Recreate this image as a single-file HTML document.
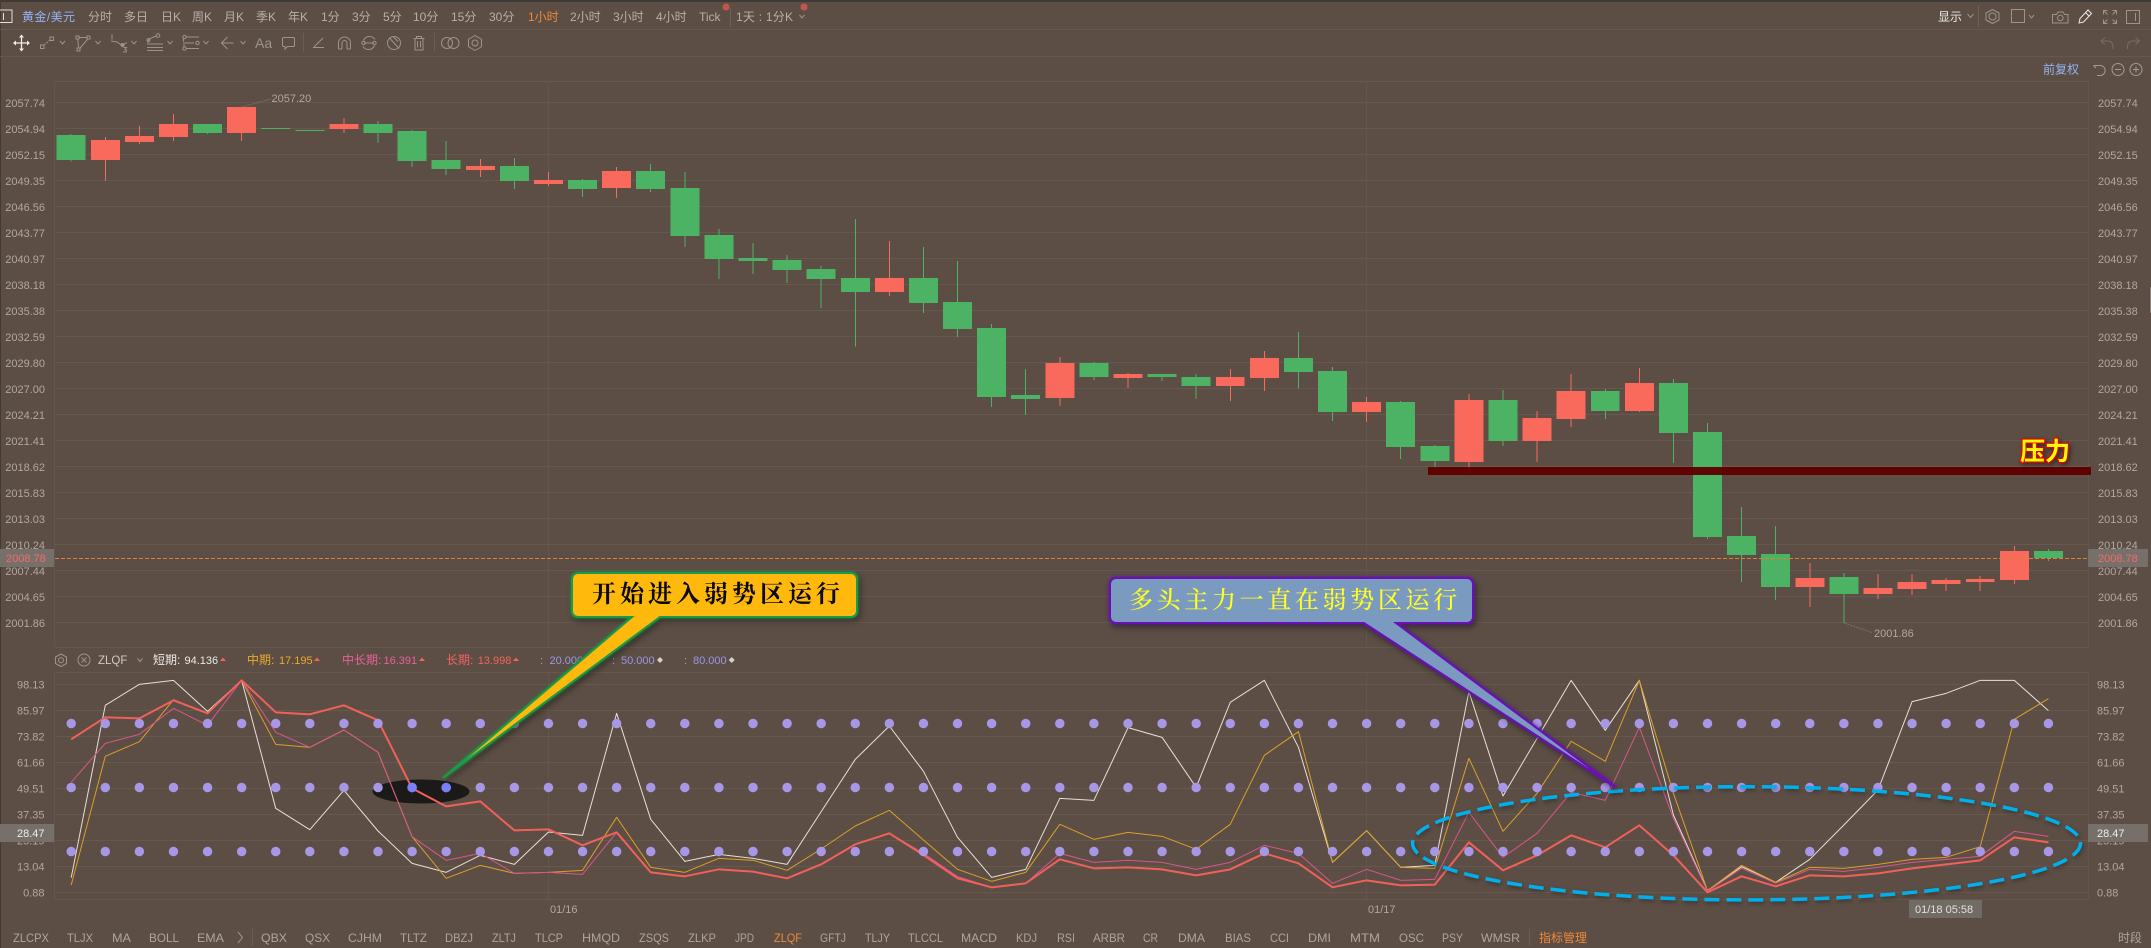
<!DOCTYPE html>
<html lang="zh"><head><meta charset="utf-8"><title>ZLQF</title>
<style>
html,body{margin:0;padding:0;background:#5c4e45;width:2151px;height:948px;overflow:hidden}
svg{display:block;font-family:"Liberation Sans","Noto Sans CJK SC",sans-serif}
.t{font-size:12px;fill:#b8afa6}
.a{font-size:11px;fill:#b0a79f}
.e{text-anchor:end}
.b{font-size:12px;fill:#ada59d}
.i{fill:none;stroke:#9c9389;stroke-width:1}
.n{vector-effect:non-scaling-stroke;fill:none;stroke-linejoin:round}
.c{font-family:"Noto Serif CJK SC","Liberation Serif",serif}
</style></head><body>
<svg width="2151" height="948" viewBox="0 0 2151 948" xmlns="http://www.w3.org/2000/svg">
<rect width="2151" height="948" fill="#5c4e45"/>
<rect width="2151" height="2" fill="#3f3a36"/>
<rect width="1" height="948" fill="#403b37"/>
<rect x="2148" y="29" width="3" height="1" fill="#c8762f"/>
<rect x="2150" y="287" width="1" height="26" fill="#8a8178"/>

<!-- frame lines -->
<g shape-rendering="crispEdges" fill="#65584e">
<rect y="29" width="2151" height="1"/><rect y="56" width="2151" height="1"/>
<rect x="55" y="81" width="2033" height="1"/><rect x="55" y="647" width="2033" height="1"/>
<rect x="55" y="672" width="2033" height="1"/><rect x="55" y="899" width="2033" height="1"/>
<rect x="54" y="81" width="1" height="566" fill="#63564d"/><rect x="2088" y="81" width="1" height="566" fill="#63564d"/>
<rect x="54" y="672" width="1" height="227" fill="#63564d"/><rect x="2088" y="672" width="1" height="227" fill="#63564d"/>
<rect x="548" y="81" width="1" height="566" fill="#62554c"/><rect x="1366" y="81" width="1" height="566" fill="#62554c"/>
<rect x="548" y="672" width="1" height="227" fill="#62554c"/><rect x="1366" y="672" width="1" height="227" fill="#62554c"/>
</g>
<line x1="1071.5" x2="1071.5" y1="102" y2="623" stroke="#65584e" stroke-width="2033" stroke-dasharray="1 25" shape-rendering="crispEdges"/>
<line x1="1071.5" x2="1071.5" y1="684" y2="893" stroke="#65584e" stroke-width="2033" stroke-dasharray="1 25" shape-rendering="crispEdges"/>

<!-- toolbar 1 -->
<rect x="-1" y="10" width="13" height="12.5" fill="none" stroke="#e4dfda"/><path d="M3.5 13v7" stroke="#e4dfda"/>
<text x="22" y="21" class="t" style="fill:#93b4f2" textLength="53">黄金/美元</text>
<text x="88" y="21" class="t">分时</text><text x="124" y="21" class="t">多日</text>
<text x="161" y="21" class="t">日K</text><text x="192" y="21" class="t">周K</text><text x="224" y="21" class="t">月K</text><text x="256" y="21" class="t">季K</text><text x="288" y="21" class="t">年K</text>
<text x="321" y="21" class="t">1分</text><text x="352" y="21" class="t">3分</text><text x="383" y="21" class="t">5分</text>
<text x="413" y="21" class="t">10分</text><text x="451" y="21" class="t">15分</text><text x="489" y="21" class="t">30分</text>
<text x="528" y="21" class="t" style="fill:#ef8838">1小时</text>
<text x="570" y="21" class="t">2小时</text><text x="613" y="21" class="t">3小时</text><text x="656" y="21" class="t">4小时</text>
<text x="699" y="21" class="t">Tick</text>
<rect x="730" y="8" width="1" height="19" fill="#6f6258"/>
<text x="736" y="21" class="t" textLength="57">1天 : 1分K</text>
<path class="i" d="M799.5 15l2.5 3 2.5-3"/>
<circle cx="726" cy="7" r="3.5" fill="#c0564f"/><circle cx="804" cy="7" r="3.5" fill="#c0564f"/>

<text x="1938" y="21" class="t" style="fill:#ece8e4">显示</text>
<path class="i" d="M1967.500 14l3 3.500 3-3.500"/>
<rect x="1978" y="6" width="1" height="21" fill="#6f6258"/>
<g class="i"><path d="M1992.500 9.500l6.500 3.500v7l-6.500 3.500-6.500-3.500v-7z" stroke-linejoin="round"/><circle cx="1992.500" cy="16.500" r="3.500"/>
<rect x="2011.500" y="9.500" width="13" height="13"/><path d="M2029 15l2.500 3 2.500-3"/>
<path d="M2052.500 14.500h4l1.500-2.500h5l1.500 2.500h3.500v8.500h-15.500z"/><circle cx="2060.300" cy="18" r="2.800"/></g>
<path d="M2079 23l1-4.500 8-8.500 3.500 3.500-8 8.500zM2085.500 12.500l3.500 3.500" fill="none" stroke="#ece8e4"/>
<path class="i" d="M2103.500 14.500v-4h4M2116.500 14.500v-4h-4M2103.500 19.500v4h4M2116.500 19.500v4h-4M2104 11l3.500 3.500M2116 11l-3.500 3.500M2104 23l3.500-3.500M2116 23l-3.500-3.500"/>
<rect class="i" x="2126.500" y="10.500" width="13" height="13"/><path class="i" d="M2135.500 13v8"/>

<!-- toolbar 2 -->
<g fill="none" stroke="#f0ece8" stroke-width="1.300"><path d="M21.500 36v14M14.500 43h14"/></g>
<path fill="#f0ece8" d="M21.500 34.500l2.500 3h-5zM21.500 51.500l2.500-3h-5zM13 43l3-2.500v5zM30 43l-3-2.500v5z"/>
<g class="i">
<rect x="40.500" y="45" width="3.500" height="3.500"/><rect x="50" y="37" width="3.500" height="3.500"/><path d="M44 45l6-5" stroke-dasharray="2 1"/>
<path d="M60 41l2.500 3 2.500-3"/>
<rect x="76" y="36" width="3" height="3"/><rect x="87" y="36" width="3" height="3"/><rect x="77" y="48" width="3" height="3"/><path d="M79 37.500h8M77.700 39l1 9M87.800 39l-8 9.500"/>
<path d="M95.500 41l2.500 3 2.500-3"/>
<path d="M112 34.500v5M111 41l6 1 5 3.500 5-3"/><circle cx="122.500" cy="45" r="1.500" fill="#a39b93"/>
<path d="M123.500 47.500h3l-1.500 2 1.500 1-.5 1.500h-3"/>
<path d="M131.500 41l2.500 3 2.500-3"/>
<path d="M147 44h16M147 47.500h16M147 50.500h16M148 43v-2.500q3-3 8.500-4.500"/><circle cx="158" cy="35.500" r="1.800"/><circle cx="148.500" cy="40" r="1.500"/>
<path d="M167.500 41l2.500 3 2.500-3"/>
<path d="M186 37h13M183 43h11M186 48.500h13"/><circle cx="184.500" cy="37" r="1.700"/><circle cx="197.500" cy="43" r="1.700"/><circle cx="184.500" cy="48.500" r="1.700"/><path d="M183.500 38.500v3M184 44.500v3"/>
<path d="M203.500 41l2.500 3 2.500-3"/>
<path d="M233.500 43H222M227.500 37l-6 6 6 6"/>
<path d="M240.500 41l2.500 3 2.500-3"/>
</g>
<text x="255" y="48" font-size="14" fill="#9c9389">Aa</text>
<g class="i">
<path d="M283.500 37.500h10a1 1 0 0 1 1 1v7a1 1 0 0 1-1 1h-6l-2.500 2.500v-2.500h-1.500a1 1 0 0 1-1-1v-7a1 1 0 0 1 1-1z"/>
<path d="M313 47.500h11M314 47l9-9"/>
<path d="M338.500 49V43a6 6 0 0 1 12 0v6M342 49V43a2.500 2.500 0 0 1 5 0v6M338.500 49H342M347 49h3.500"/>
<path d="M363.500 40.500a6.500 6.500 0 0 1 11.500-1M374.500 45.500a6.500 6.500 0 0 1-11.500 1M364 43h10"/><circle cx="363.500" cy="43" r="1.700"/><circle cx="374.500" cy="43" r="1.700"/>
<circle cx="394" cy="43" r="6.500"/><path d="M389.500 38l9.500 10.500M393 36.500l5 5"/>
<path d="M413.500 38.500h11M416.500 38.500v-2h5v2M415 38.500v11.500h8V38.500M417.500 41v6.500M420.500 41v6.500"/>
<circle cx="447" cy="43" r="5.500"/><circle cx="453.500" cy="43" r="5.500"/>
<path d="M475 35.500l6.500 3.750v7.500L475 50.500l-6.500-3.750v-7.500z" stroke-linejoin="round"/><circle cx="475" cy="43" r="3"/>
</g>
<rect x="303" y="33" width="1" height="19" fill="#6a5d53"/><rect x="434" y="33" width="1" height="19" fill="#6a5d53"/>
<path d="M2113 49v-3a5 5 0 0 0-5-5h-7m4-3.500l-4 3.500 4 3.500M2127.500 49v-3a5 5 0 0 1 5-5h7m-4-3.500l4 3.500-4 3.500" fill="none" stroke="#786c62"/>
<text x="2043" y="73.500" class="t" style="fill:#93b4f2">前复权</text>
<g fill="none" stroke="#a39b93"><path d="M2093.500 65.500h5.500a5 5 0 0 1 2 10h-4M2093.500 65.500l2.500 2.500"/><circle cx="2118" cy="69.500" r="6"/><path d="M2115 69.500h6"/><circle cx="2136" cy="69.500" r="6"/><path d="M2133 69.500h6M2136 66.500v6"/></g>

<!-- main axis labels -->
<g class="a">
<text x="45" y="107" class="a e">2057.74</text><text x="45" y="133" class="a e">2054.94</text><text x="45" y="159" class="a e">2052.15</text><text x="45" y="185" class="a e">2049.35</text><text x="45" y="211" class="a e">2046.56</text><text x="45" y="237" class="a e">2043.77</text><text x="45" y="263" class="a e">2040.97</text><text x="45" y="289" class="a e">2038.18</text><text x="45" y="315" class="a e">2035.38</text><text x="45" y="341" class="a e">2032.59</text><text x="45" y="367" class="a e">2029.80</text><text x="45" y="393" class="a e">2027.00</text><text x="45" y="419" class="a e">2024.21</text><text x="45" y="445" class="a e">2021.41</text><text x="45" y="471" class="a e">2018.62</text><text x="45" y="497" class="a e">2015.83</text><text x="45" y="523" class="a e">2013.03</text><text x="45" y="549" class="a e">2010.24</text><text x="45" y="575" class="a e">2007.44</text><text x="45" y="601" class="a e">2004.65</text><text x="45" y="627" class="a e">2001.86</text>
<text x="2098" y="107" class="a">2057.74</text><text x="2098" y="133" class="a">2054.94</text><text x="2098" y="159" class="a">2052.15</text><text x="2098" y="185" class="a">2049.35</text><text x="2098" y="211" class="a">2046.56</text><text x="2098" y="237" class="a">2043.77</text><text x="2098" y="263" class="a">2040.97</text><text x="2098" y="289" class="a">2038.18</text><text x="2098" y="315" class="a">2035.38</text><text x="2098" y="341" class="a">2032.59</text><text x="2098" y="367" class="a">2029.80</text><text x="2098" y="393" class="a">2027.00</text><text x="2098" y="419" class="a">2024.21</text><text x="2098" y="445" class="a">2021.41</text><text x="2098" y="471" class="a">2018.62</text><text x="2098" y="497" class="a">2015.83</text><text x="2098" y="523" class="a">2013.03</text><text x="2098" y="549" class="a">2010.24</text><text x="2098" y="575" class="a">2007.44</text><text x="2098" y="601" class="a">2004.65</text><text x="2098" y="627" class="a">2001.86</text>
</g>

<!-- candles: x in index units, y in 3x units -->
<g transform="translate(71.2 0) scale(34.09 .33333)" shape-rendering="crispEdges">
<path class="n" stroke="#4cb364" stroke-width="1" d="M0 402V485M4 372V402M6 384V387M7 390V393M9 363V429M10 390V501M11 423V525M13 474V567M15 537V591M17 492V576M18 516V741M19 687V837M20 729V822M21 765V849M22 798V924M23 657V1040M25 741V939M26 783V1011M27 972V1221M28 1107V1245M30 1086V1140M32 1122V1143M33 1122V1197M36 996V1165M37 1101V1263M39 1203V1377M40 1335V1401M42 1170V1338M45 1167V1257M47 1137V1389M48 1269V1617M49 1521V1746M50 1578V1800M52 1719V1869M58 1647V1683"/>
<path class="n" stroke="#f96a5c" stroke-width="1" d="M1 411V543M2 378V432M3 342V423M5 321V423M8 354V399M12 477V531M14 516V558M16 501V594M24 723V888M29 1071V1218M31 1119V1164M34 1107V1203M35 1053V1173M38 1191V1266M41 1182V1419M43 1233V1386M44 1122V1281M46 1104V1236M51 1689V1821M53 1722V1797M54 1722V1785M55 1734V1773M56 1728V1773M57 1638V1752"/>
<path fill="#4cb364" d="M-.425 405h.85V480h-.85zM3.575 372h.85V399h-.85zM5.575 384h.85V387h-.85zM6.575 390h.85V393h-.85zM8.575 372h.85V399h-.85zM9.575 393h.85V483h-.85zM10.575 480h.85V507h-.85zM12.575 498h.85V543h-.85zM14.575 540h.85V567h-.85zM16.575 513h.85V567h-.85zM17.575 564h.85V708h-.85zM18.575 705h.85V777h-.85zM19.575 774h.85V783h-.85zM20.575 780h.85V810h-.85zM21.575 807h.85V837h-.85zM22.575 834h.85V876h-.85zM24.575 834h.85V909h-.85zM25.575 906h.85V987h-.85zM26.575 984h.85V1191h-.85zM27.575 1185h.85V1197h-.85zM29.575 1089h.85V1131h-.85zM31.575 1122h.85V1131h-.85zM32.575 1131h.85V1158h-.85zM35.575 1074h.85V1116h-.85zM36.575 1113h.85V1236h-.85zM38.575 1206h.85V1341h-.85zM39.575 1338h.85V1383h-.85zM41.575 1200h.85V1323h-.85zM44.575 1173h.85V1233h-.85zM46.575 1149h.85V1299h-.85zM47.575 1296h.85V1611h-.85zM48.575 1608h.85V1665h-.85zM49.575 1662h.85V1761h-.85zM51.575 1731h.85V1782h-.85zM57.575 1653h.85V1674h-.85z"/>
<path fill="#f96a5c" d="M.575 420h.85V480h-.85zM1.575 408h.85V426h-.85zM2.575 372h.85V411h-.85zM4.575 321h.85V399h-.85zM7.575 372h.85V387h-.85zM11.575 498h.85V510h-.85zM13.575 540h.85V552h-.85zM15.575 513h.85V564h-.85zM23.575 834h.85V876h-.85zM28.575 1089h.85V1194h-.85zM30.575 1122h.85V1134h-.85zM33.575 1131h.85V1158h-.85zM34.575 1074h.85V1134h-.85zM37.575 1206h.85V1236h-.85zM40.575 1200h.85V1386h-.85zM42.575 1254h.85V1323h-.85zM43.575 1173h.85V1257h-.85zM45.575 1149h.85V1233h-.85zM50.575 1734h.85V1761h-.85zM52.575 1764h.85V1782h-.85zM53.575 1746h.85V1767h-.85zM54.575 1740h.85V1752h-.85zM55.575 1737h.85V1746h-.85zM56.575 1653h.85V1740h-.85z"/>
</g>
<path d="M241 107L271 99M1844.500 623L1872 632.500" fill="none" stroke="#7a6f66" stroke-dasharray="2 1"/>
<text x="271.500" y="102" class="a">2057.20</text>
<text x="1874" y="637" class="a">2001.86</text>

<!-- current price line -->
<line x1="55" x2="2088" y1="558.500" y2="558.500" stroke="#e0813a" stroke-dasharray="4 2"/>
<rect y="549" width="54" height="18" fill="#77706a"/><rect x="2088" y="549" width="60" height="18" fill="#77706a"/>
<text x="6" y="562" class="a" style="fill:#f46a6a">2008.78</text><text x="2098" y="562" class="a" style="fill:#f46a6a">2008.78</text>

<!-- pressure -->
<rect x="1428" y="467" width="663" height="8" fill="#5f0000" opacity=".96"/>
<text x="2020" y="460" font-size="25" font-weight="700" fill="#ffff00" stroke="#e80000" stroke-width="2.400" paint-order="stroke" style="font-family:'Noto Sans CJK SC',sans-serif;filter:drop-shadow(2px 2px 2px rgba(0,0,0,.4))">压力</text>

<!-- legend -->
<g class="i"><path d="M61 654l5.500 3v6.500l-5.500 3-5.500-3V657z" stroke-linejoin="round"/><circle cx="61" cy="660.300" r="2.500"/><circle cx="84" cy="660" r="6"/><path d="M81.500 657.500l5 5M86.500 657.500l-5 5M137.500 658.500l2.500 3 2.500-3"/></g>
<text x="98" y="664" class="a" style="fill:#d0c9c2;font-size:11.500px">ZLQF</text>
<g font-size="12">
<text x="153" y="664" fill="#eee9e4">短期:</text><text x="184.500" y="664" class="a" style="fill:#eee9e4">94.136</text>
<text x="247" y="664" fill="#e8ab2c">中期:</text><text x="279" y="664" class="a" style="fill:#e8ab2c">17.195</text>
<text x="342" y="664" fill="#e8609c">中长期:</text><text x="383.500" y="664" class="a" style="fill:#e8609c">16.391</text>
<text x="446" y="664" fill="#f4625c">长期:</text><text x="477.700" y="664" class="a" style="fill:#f4625c">13.998</text>
</g>
<path fill="#f4625c" d="M223 657.500l3 3.500h-6zM317 657.500l3 3.500h-6zM422 657.500l3 3.500h-6zM516 657.500l3 3.500h-6z"/>
<g class="a" style="font-size:11px"><text x="540" y="664" style="fill:#9a96e6">:</text><text x="549.500" y="664" style="fill:#9a96e6">20.000</text><text x="612" y="664" style="fill:#9a96e6">:</text><text x="621" y="664" style="fill:#9a96e6">50.000</text><text x="684" y="664" style="fill:#9a96e6">:</text><text x="693" y="664" style="fill:#9a96e6">80.000</text></g>
<path fill="#d6d0ca" d="M660 657l3 3-3 3-3-3zM731.700 657l3 3-3 3-3-3z"/>

<!-- sub axis labels -->
<text x="44.500" y="688.500" class="a e">98.13</text><text x="44.500" y="714.500" class="a e">85.97</text><text x="44.500" y="740.500" class="a e">73.82</text><text x="44.500" y="766.500" class="a e">61.66</text><text x="44.500" y="792.500" class="a e">49.51</text><text x="44.500" y="818.500" class="a e">37.35</text><text x="44.500" y="844.500" class="a e">25.19</text><text x="44.500" y="870.500" class="a e">13.04</text><text x="44.500" y="896.500" class="a e">0.88</text>
<text x="2097" y="688.500" class="a">98.13</text><text x="2097" y="714.500" class="a">85.97</text><text x="2097" y="740.500" class="a">73.82</text><text x="2097" y="766.500" class="a">61.66</text><text x="2097" y="792.500" class="a">49.51</text><text x="2097" y="818.500" class="a">37.35</text><text x="2097" y="844.500" class="a">25.19</text><text x="2097" y="870.500" class="a">13.04</text><text x="2097" y="896.500" class="a">0.88</text>
<rect y="824" width="54" height="18" fill="#77706a"/><rect x="2088" y="824" width="60" height="18" fill="#77706a"/>
<text x="44.500" y="837" class="a e" style="fill:#f0ece8">28.47</text><text x="2097" y="837" class="a" style="fill:#f0ece8">28.47</text>

<!-- black ellipse -->
<ellipse cx="421" cy="791.500" rx="48.500" ry="12" fill="#1b1a19"/>

<!-- indicator lines -->
<g transform="translate(71.2 650) scale(34.09 .33333)">
<polyline class="n" stroke="#e8dfd6" stroke-width="1" points="0,683 1,166 2,103 3,91 4,184 5,91 6,475 7,539 8,421 9,543 10,640 11,667 12,616 13,643 14,546 15,556 16,190 17,508 18,634 19,613 20,625 21,643 22,485 23,328 24,228 25,364 26,562 27,682 28,658 29,445 30,451 31,233 32,262 33,412 34,157 35,91 36,292 37,637 38,542 39,652 40,646 41,125 42,438 43,265 44,91 45,241 46,91 47,495 48,722 49,650 50,697 51,628 52,525 53,420 54,155 55,130 56,91 57,91 58,182"/>
<polyline class="n" stroke="#d9a028" stroke-width="1" points="0,705 1,319 2,275 3,149 4,190 5,91 6,283 7,292 8,240 9,307 10,560 11,685 12,646 13,670 14,667 15,661 16,502 17,652 18,667 19,625 20,631 21,661 22,597 23,528 24,481 25,570 26,658 27,694 28,667 29,523 30,568 31,547 32,559 33,598 34,523 35,316 36,245 37,637 38,542 39,652 40,655 41,325 42,544 43,430 44,274 45,334 46,91 47,430 48,722 49,646 50,697 51,652 52,655 53,643 54,628 55,622 56,590 57,208 58,146"/>
<polyline class="n" stroke="#d8568c" stroke-width="1" points="0,397 1,280 2,253 3,175 4,226 5,91 6,247 7,292 8,240 9,307 10,560 11,631 12,610 13,670 14,667 15,673 16,547 17,667 18,679 19,658 20,665 21,685 22,643 23,583 24,550 25,610 26,680 27,712 28,700 29,610 30,637 31,631 32,637 33,658 34,637 35,586 36,610 37,700 38,658 39,691 40,688 41,487 42,622 43,550 44,427 45,451 46,232 47,505 48,724 49,655 50,700 51,658 52,664 53,652 54,637 55,628 56,619 57,544 58,559"/>
<polyline class="n" stroke="#f2605a" stroke-width="2" points="0,268 1,202 2,205 3,151 4,190 5,91 6,187 7,193 8,166 9,211 10,415 11,469 12,454 13,541 14,538 15,586 16,547 17,667 18,679 19,658 20,665 21,685 22,643 23,583 24,550 25,615 26,685 27,712 28,700 29,628 30,655 31,652 32,658 33,676 34,658 35,610 36,640 37,712 38,691 39,706 40,704 41,577 42,661 43,616 44,556 45,592 46,526 47,616 48,727 49,679 50,709 51,676 52,679 53,670 54,655 55,643 56,631 57,562 58,577"/>
</g>

<!-- dots -->
<g stroke="#a797e6" stroke-width="9.500" stroke-linecap="round" stroke-dasharray="0 34.09">
<line x1="71.200" x2="2049" y1="723.500" y2="723.500"/>
<line x1="71.200" x2="2049" y1="787.500" y2="787.500"/>
<line x1="71.200" x2="2049" y1="851.500" y2="851.500"/>
</g>
<circle cx="412.100" cy="787.500" r="4.750" fill="#7a80fa"/><circle cx="446.200" cy="787.500" r="4.750" fill="#7a80fa"/>

<!-- dates -->
<text x="550" y="913" class="a">01/16</text><text x="1368" y="913" class="a">01/17</text>
<rect x="1909" y="900" width="73" height="18" fill="#716b65"/>
<text x="1915" y="913" class="a" style="fill:#e4dfda">01/18 05:58</text>

<!-- dashed ellipse -->
<ellipse cx="1746.500" cy="843.300" rx="334" ry="56.600" fill="none" stroke="#00b0ec" stroke-width="3.500" stroke-dasharray="15 7" style="filter:drop-shadow(1px 2px 2px rgba(0,0,0,.35))"/>

<!-- callouts -->
<path d="M578 573H851a6 6 0 0 1 6 6V611a6 6 0 0 1-6 6H660L443 778L632 617H578a6 6 0 0 1-6-6V579a6 6 0 0 1 6-6Z" fill="#ffb90c" stroke="#1b9a47" stroke-width="2" style="filter:drop-shadow(0 0 1.500px #1b9a47) drop-shadow(2px 3px 3px rgba(0,0,0,.4))"/>
<text x="592" y="602" class="c" font-size="24" font-weight="700" fill="#0a0a0a" letter-spacing="4">开始进入弱势区运行</text>
<path d="M1116 578H1467a6 6 0 0 1 6 6V617a6 6 0 0 1-6 6H1396L1615.500 787L1364 623H1116a6 6 0 0 1-6-6V584a6 6 0 0 1 6-6Z" fill="#7b9ac0" stroke="#6a10b8" stroke-width="2" style="filter:drop-shadow(0 0 1.500px #6a10b8) drop-shadow(2px 3px 3px rgba(0,0,0,.4))"/>
<text x="1129" y="608" class="c" font-size="24" font-weight="500" fill="#ffff20" letter-spacing="3.650">多头主力一直在弱势区运行</text>

<!-- bottom tabs -->
<g>
<text x="13" y="942" class="b" textLength="36" lengthAdjust="spacingAndGlyphs">ZLCPX</text>
<text x="67" y="942" class="b" textLength="26" lengthAdjust="spacingAndGlyphs">TLJX</text>
<text x="112" y="942" class="b" textLength="19" lengthAdjust="spacingAndGlyphs">MA</text>
<text x="149" y="942" class="b" textLength="30" lengthAdjust="spacingAndGlyphs">BOLL</text>
<text x="197" y="942" class="b" textLength="27" lengthAdjust="spacingAndGlyphs">EMA</text>
<path class="i" d="M238 932l4.500 5.500-4.500 5.500"/><rect x="252" y="929" width="1" height="17" fill="#6a5d53"/>
<text x="261" y="942" class="b" textLength="26" lengthAdjust="spacingAndGlyphs">QBX</text>
<text x="305" y="942" class="b" textLength="25" lengthAdjust="spacingAndGlyphs">QSX</text>
<text x="348" y="942" class="b" textLength="34" lengthAdjust="spacingAndGlyphs">CJHM</text>
<text x="400" y="942" class="b" textLength="27" lengthAdjust="spacingAndGlyphs">TLTZ</text>
<text x="445" y="942" class="b" textLength="28" lengthAdjust="spacingAndGlyphs">DBZJ</text>
<text x="492" y="942" class="b" textLength="24" lengthAdjust="spacingAndGlyphs">ZLTJ</text>
<text x="535" y="942" class="b" textLength="28" lengthAdjust="spacingAndGlyphs">TLCP</text>
<text x="582" y="942" class="b" textLength="38" lengthAdjust="spacingAndGlyphs">HMQD</text>
<text x="639" y="942" class="b" textLength="30" lengthAdjust="spacingAndGlyphs">ZSQS</text>
<text x="688" y="942" class="b" textLength="28" lengthAdjust="spacingAndGlyphs">ZLKP</text>
<text x="735" y="942" class="b" textLength="19" lengthAdjust="spacingAndGlyphs">JPD</text>
<text x="774" y="942" class="b" style="fill:#ef8838" textLength="28" lengthAdjust="spacingAndGlyphs">ZLQF</text>
<text x="820" y="942" class="b" textLength="26" lengthAdjust="spacingAndGlyphs">GFTJ</text>
<text x="865" y="942" class="b" textLength="25" lengthAdjust="spacingAndGlyphs">TLJY</text>
<text x="908" y="942" class="b" textLength="35" lengthAdjust="spacingAndGlyphs">TLCCL</text>
<text x="961" y="942" class="b" textLength="36" lengthAdjust="spacingAndGlyphs">MACD</text>
<text x="1016" y="942" class="b" textLength="21" lengthAdjust="spacingAndGlyphs">KDJ</text>
<text x="1057" y="942" class="b" textLength="18" lengthAdjust="spacingAndGlyphs">RSI</text>
<text x="1093" y="942" class="b" textLength="32" lengthAdjust="spacingAndGlyphs">ARBR</text>
<text x="1143" y="942" class="b" textLength="15" lengthAdjust="spacingAndGlyphs">CR</text>
<text x="1178" y="942" class="b" textLength="27" lengthAdjust="spacingAndGlyphs">DMA</text>
<text x="1225" y="942" class="b" textLength="26" lengthAdjust="spacingAndGlyphs">BIAS</text>
<text x="1270" y="942" class="b" textLength="19" lengthAdjust="spacingAndGlyphs">CCI</text>
<text x="1308" y="942" class="b" textLength="23" lengthAdjust="spacingAndGlyphs">DMI</text>
<text x="1350" y="942" class="b" textLength="30" lengthAdjust="spacingAndGlyphs">MTM</text>
<text x="1399" y="942" class="b" textLength="25" lengthAdjust="spacingAndGlyphs">OSC</text>
<text x="1442" y="942" class="b" textLength="21" lengthAdjust="spacingAndGlyphs">PSY</text>
<text x="1481" y="942" class="b" textLength="39" lengthAdjust="spacingAndGlyphs">WMSR</text>
<rect x="1529" y="929" width="1" height="17" fill="#6a5d53"/>
<text x="1539" y="942" class="b" style="fill:#ef8838">指标管理</text>
<text x="2118" y="942" class="b">时段</text>
</g>
</svg>
</body></html>
